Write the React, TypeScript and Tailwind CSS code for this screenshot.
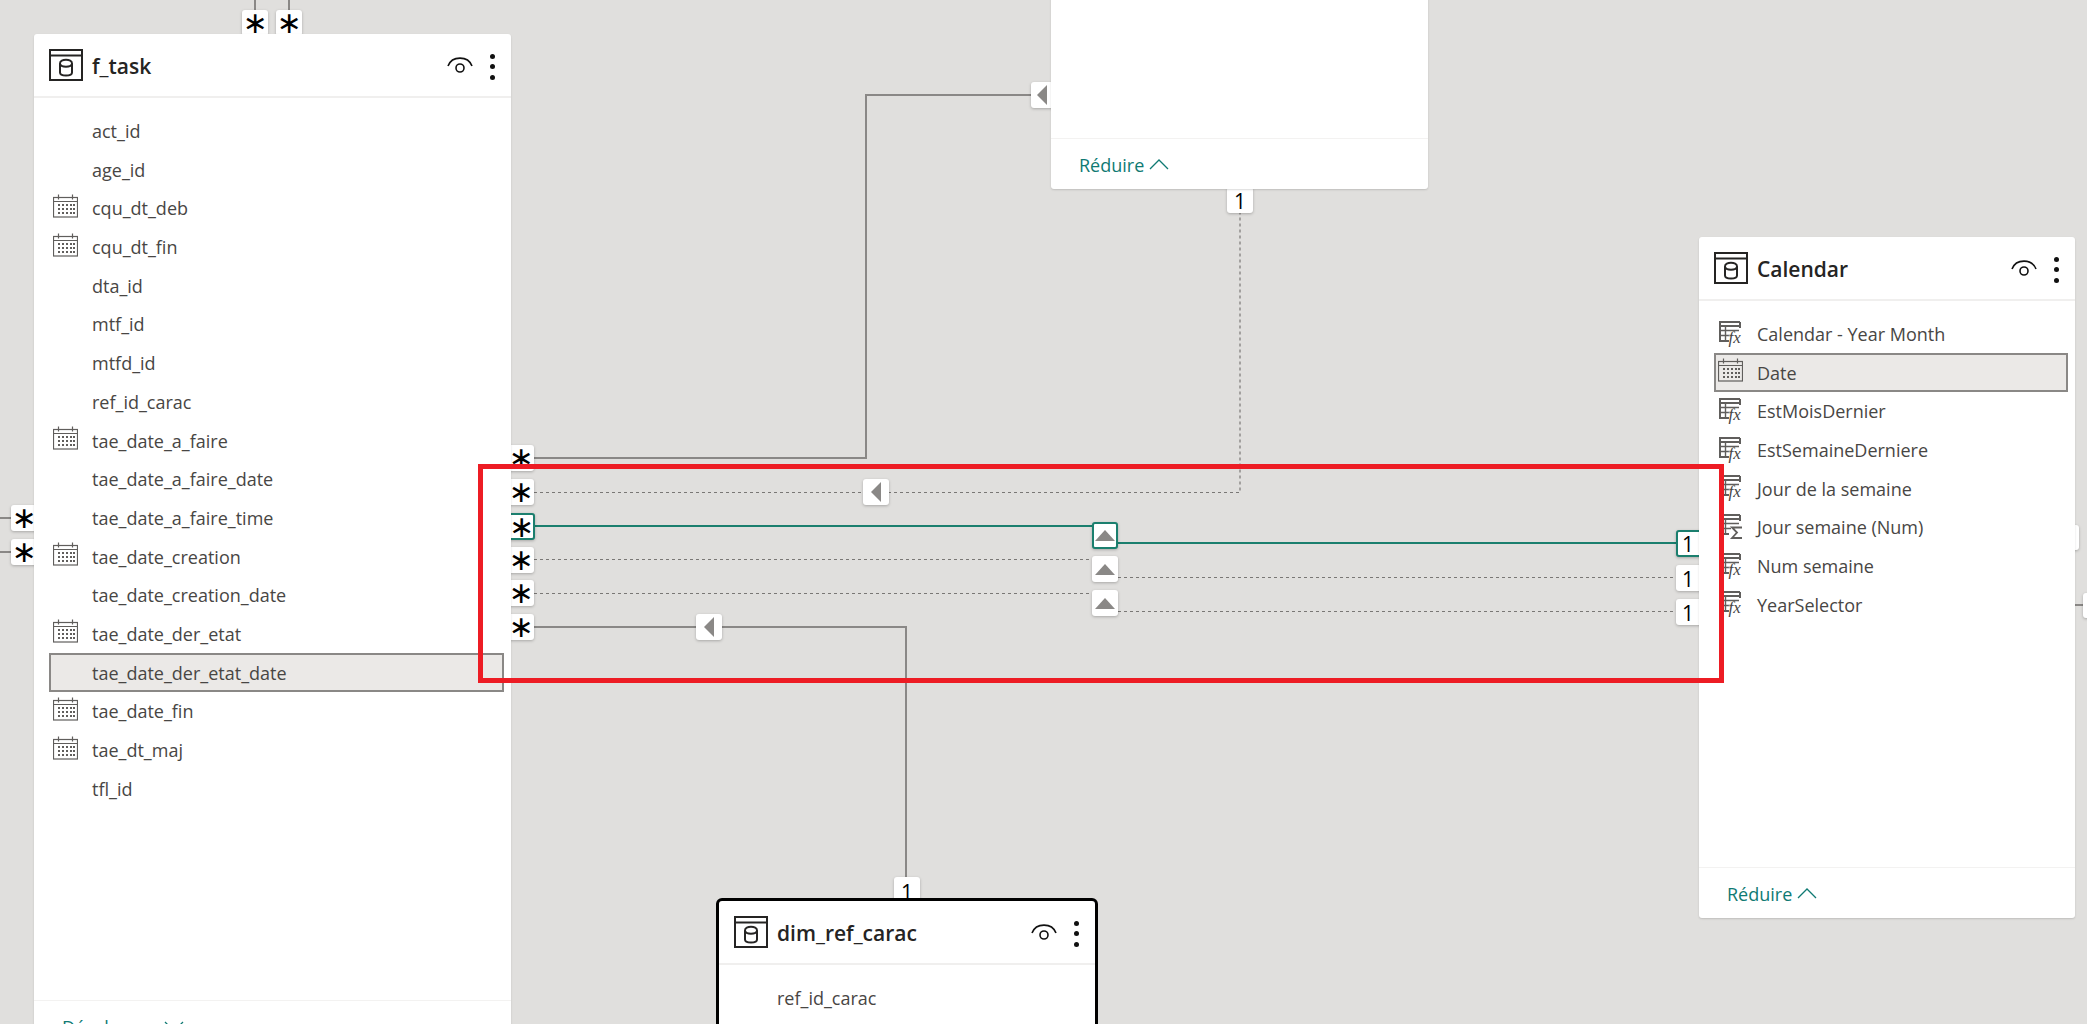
const font = { fontFamily: '"Open Sans", sans-serif' };

type Field = { name: string; icon?: "cal" | "fx" | "sum"; selected?: boolean };

const taskFields: Field[] = [
  { name: "act_id" },
  { name: "age_id" },
  { name: "cqu_dt_deb", icon: "cal" },
  { name: "cqu_dt_fin", icon: "cal" },
  { name: "dta_id" },
  { name: "mtf_id" },
  { name: "mtfd_id" },
  { name: "ref_id_carac" },
  { name: "tae_date_a_faire", icon: "cal" },
  { name: "tae_date_a_faire_date" },
  { name: "tae_date_a_faire_time" },
  { name: "tae_date_creation", icon: "cal" },
  { name: "tae_date_creation_date" },
  { name: "tae_date_der_etat", icon: "cal" },
  { name: "tae_date_der_etat_date", selected: true },
  { name: "tae_date_fin", icon: "cal" },
  { name: "tae_dt_maj", icon: "cal" },
  { name: "tfl_id" },
];

const calendarFields: Field[] = [
  { name: "Calendar - Year Month", icon: "fx" },
  { name: "Date", icon: "cal", selected: true },
  { name: "EstMoisDernier", icon: "fx" },
  { name: "EstSemaineDerniere", icon: "fx" },
  { name: "Jour de la semaine", icon: "fx" },
  { name: "Jour semaine (Num)", icon: "sum" },
  { name: "Num semaine", icon: "fx" },
  { name: "YearSelector", icon: "fx" },
];

function CalendarIcon() {
  const dots = [];
  for (const y of [10, 14, 18]) {
    for (const x of [5, 9, 13, 17, 20]) {
      dots.push(<rect key={`${x}-${y}`} x={x} y={y} width="2" height="2" fill="#605e5c" />);
    }
  }
  return (
    <svg width="25" height="24" viewBox="0 0 25 24" className="-mt-[5px]" fill="none" stroke="#605e5c">
      <rect x="0.5" y="3.5" width="24" height="19.5" strokeWidth="1.2" />
      <path d="M1 7.5h23M5.5 0.5v5M19.5 0.5v5" strokeWidth="1.2" />
      <g stroke="none">{dots}</g>
    </svg>
  );
}

function ColumnIcon({ sum }: { sum?: boolean }) {
  return (
    <svg width="27" height="26" viewBox="0 0 27 26" fill="none" stroke="#605e5c" className="-mt-[1px] shrink-0">
      <path d="M1 1h21M1 5h21M22 1v6" strokeWidth="2" />
      <path d="M2 1v19M1 20h10" strokeWidth="2" />
      <path d="M7.5 5v15M2 9.5h19M2 14.5h11" strokeWidth="1.4" />
      {sum ? (
        <path d="M24 13.5h-10l5 5-5 5.5h10" strokeWidth="1.8" />
      ) : (
        <text x="10.5" y="22" fontSize="17" fontStyle="italic" fill="#484644" stroke="#fff" strokeWidth="0.4" paintOrder="stroke" fontFamily='"Liberation Serif", serif'>
          fx
        </text>
      )}
    </svg>
  );
}

function TableIcon() {
  return (
    <svg width="34" height="32" viewBox="0 0 34 32" fill="none" stroke="#252423" strokeWidth="2" className="shrink-0">
      <rect x="1" y="1" width="32" height="30" />
      <path d="M1 6.5h32" />
      <path d="M11 14.5c0-5 12-5 12 0v9c0 4-12 4-12 0zM11 15c1 3.5 11 3.5 12 0" />
    </svg>
  );
}

function EyeIcon() {
  return (
    <svg width="26" height="17" viewBox="0 0 26 17" fill="none" stroke="#111" strokeWidth="1.6" className="ml-auto mt-[1px]">
      <path d="M1 9C5-1.5 21-1.5 25 9" />
      <circle cx="13" cy="11" r="4" />
    </svg>
  );
}

function Dots() {
  return (
    <div className="mt-[3px] flex w-[5px] flex-col gap-[5.5px]">
      <div className="size-[5px] rounded-full bg-[#111]" />
      <div className="size-[5px] rounded-full bg-[#111]" />
      <div className="size-[5px] rounded-full bg-[#111]" />
    </div>
  );
}

function FieldRow({ field }: { field: Field }) {
  return (
    <div
      className={`ml-[15px] mr-[7px] box-border flex h-[38.7px] items-center border-2 pl-[2px] ${
        field.selected ? "border-[#8a8886] bg-[#ebe9e7]" : "border-transparent"
      }`}
    >
      <div className="flex w-[25px] shrink-0 items-center">
        {field.icon === "cal" && <CalendarIcon />}
        {field.icon === "fx" && <ColumnIcon />}
        {field.icon === "sum" && <ColumnIcon sum />}
      </div>
      <span className="ml-[14px] mt-[1px] whitespace-nowrap text-[18px] text-[#484644]">{field.name}</span>
    </div>
  );
}

function CardHeader({ title }: { title: string }) {
  return (
    <div className="flex h-[64px] shrink-0 items-center border-b-2 border-[#f0efee] pl-[15px] pr-[16px]">
      <TableIcon />
      <span className="ml-[9px] mt-[3px] text-[21px] font-semibold text-[#252423]">{title}</span>
      <EyeIcon />
      <div className="ml-[17px]">
        <Dots />
      </div>
    </div>
  );
}

function CardFooter({ label, down }: { label: string; down?: boolean }) {
  return (
    <div className="mt-auto flex h-[51px] shrink-0 items-center gap-[5px] border-t border-[#f3f2f1] pl-[28px] text-[18px] text-[#0f7a73]">
      <span className="mt-[2px]">{label}</span>
      <svg width="20" height="11" viewBox="0 0 20 11" fill="none" stroke="#0f7a73" strokeWidth="1.3">
        <path d={down ? "M1 1l9 9 9-9" : "M1 10l9-9 9 9"} />
      </svg>
    </div>
  );
}

// small white tabs at the ends of the relationship lines
function Tab({ x, y, w = 26, h = 26, active, children }: { x: string; y: string; w?: number; h?: number; active?: boolean; children: React.ReactNode }) {
  return (
    <div
      className={`absolute box-border flex items-center justify-center rounded-[3px] bg-white shadow-[0_1px_3px_rgba(0,0,0,0.25)] ${
        active ? "border-2 border-[#1b7f6e]" : ""
      } ${x} ${y}`}
      style={{ width: w, height: h }}
    >
      {children}
    </div>
  );
}

const Star = () => (
  <span className="text-[30px] leading-none text-black" style={{ fontFamily: '"DejaVu Sans", sans-serif' }}>
    ∗
  </span>
);
const One = () => <span className="mt-[2px] text-[21px] leading-none text-black">1</span>;
const Left = () => (
  <svg width="10" height="20" viewBox="0 0 10 20">
    <path d="M10 0v20L0 10z" fill="#8a8886" />
  </svg>
);
const Up = () => (
  <svg width="20" height="11" viewBox="0 0 20 11">
    <path d="M0 11h20L10 0z" fill="#8a8886" />
  </svg>
);

function Lines() {
  return (
    <svg className="absolute left-0 top-0" width="2087" height="1024" fill="none">
      <g stroke="#8a8886" strokeWidth="2">
        <path d="M255 0v10M289 0v10M0 518h11M0 552h11" />
        <path d="M534 458h332V95h165" />
        <path d="M534 627h372v250" />
        <path d="M2075 605h8" />
      </g>
      <g stroke="#797775" strokeWidth="1.2" strokeDasharray="3 3">
        <path d="M534 492.5h706V213" />
        <path d="M534 559.5h558M1118 577.5h558" />
        <path d="M534 593.5h558M1118 611.5h558" />
      </g>
      <g stroke="#1b7f6e" strokeWidth="2">
        <path d="M534 526h558M1118 543h560" />
      </g>
    </svg>
  );
}

export default function App() {
  return (
    <div className="relative h-[1024px] w-[2087px] overflow-hidden bg-[#e0dfdd]" style={font}>
      <Lines />

      <Tab x="left-[242px]" y="top-[10px]"><Star /></Tab>
      <Tab x="left-[276px]" y="top-[10px]"><Star /></Tab>
      <Tab x="left-[11px]" y="top-[505px]"><Star /></Tab>
      <Tab x="left-[11px]" y="top-[539px]"><Star /></Tab>
      <Tab x="left-[508px]" y="top-[445px]"><Star /></Tab>
      <Tab x="left-[508px]" y="top-[479px]"><Star /></Tab>
      <Tab x="left-[508px]" y="top-[513px]" w={27} h={27} active><Star /></Tab>
      <Tab x="left-[508px]" y="top-[547px]"><Star /></Tab>
      <Tab x="left-[508px]" y="top-[580px]"><Star /></Tab>
      <Tab x="left-[508px]" y="top-[614px]"><Star /></Tab>

      <Tab x="left-[1031px]" y="top-[82px]" w={30}><div className="-ml-[8px]"><Left /></div></Tab>
      <Tab x="left-[863px]" y="top-[479px]"><Left /></Tab>
      <Tab x="left-[696px]" y="top-[614px]"><Left /></Tab>
      <Tab x="left-[1092px]" y="top-[522px]" h={27} active><Up /></Tab>
      <Tab x="left-[1092px]" y="top-[556px]"><Up /></Tab>
      <Tab x="left-[1092px]" y="top-[590px]"><Up /></Tab>

      <Tab x="left-[1227px]" y="top-[187px]"><One /></Tab>
      <Tab x="left-[894px]" y="top-[877px]" h={28}><One /></Tab>
      <Tab x="left-[1676px]" y="top-[530px]" w={30} h={27} active><div className="-ml-[6px] flex"><One /></div></Tab>
      <Tab x="left-[1676px]" y="top-[565px]" w={30}><div className="-ml-[6px] flex"><One /></div></Tab>
      <Tab x="left-[1676px]" y="top-[599px]" w={30}><div className="-ml-[6px] flex"><One /></div></Tab>
      <Tab x="left-[2070px]" y="top-[525px]" w={9} h={25}>{null}</Tab>
      <Tab x="left-[2083px]" y="top-[593px]" w={10} h={25}>{null}</Tab>

      <div className="absolute left-[34px] top-[34px] flex h-[1017px] w-[477px] flex-col rounded-[3px] bg-white shadow-[0_1px_2px_rgba(0,0,0,0.15)]">
        <CardHeader title="f_task" />
        <div className="pt-[13.7px]">
          {taskFields.map((f) => (
            <FieldRow key={f.name} field={f} />
          ))}
        </div>
        <CardFooter label="Développer" down />
      </div>

      <div className="absolute left-[1051px] top-[-100px] flex h-[289px] w-[377px] flex-col rounded-[3px] bg-white shadow-[0_1px_2px_rgba(0,0,0,0.15)]">
        <CardFooter label="Réduire" />
      </div>

      <div className="absolute left-[1699px] top-[237px] flex h-[681px] w-[376px] flex-col rounded-[3px] bg-white shadow-[0_1px_2px_rgba(0,0,0,0.15)]">
        <CardHeader title="Calendar" />
        <div className="pt-[13.7px]">
          {calendarFields.map((f) => (
            <FieldRow key={f.name} field={f} />
          ))}
        </div>
        <CardFooter label="Réduire" />
      </div>

      <div className="absolute left-[716px] top-[898px] box-border flex h-[200px] w-[382px] flex-col rounded-[6px] border-[3px] border-black bg-white">
        <CardHeader title="dim_ref_carac" />
        <div className="pt-[13.7px]">
          <FieldRow field={{ name: "ref_id_carac" }} />
        </div>
      </div>

      <div className="absolute left-[478px] top-[464px] h-[219px] w-[1246px] border-[5px] border-[#ed1c24]" />
    </div>
  );
}
